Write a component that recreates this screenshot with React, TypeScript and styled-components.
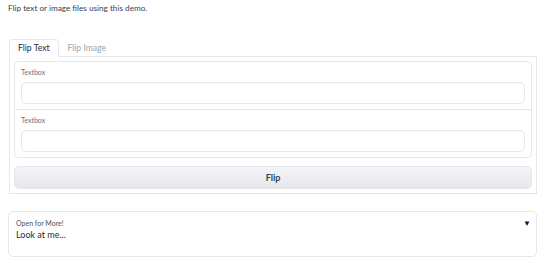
import * as React from "react";
import styled, { createGlobalStyle } from "styled-components";

const GlobalStyle = createGlobalStyle`
  html, body {
    margin: 0;
    padding: 0;
    background: #ffffff;
  }
  body {
    font-family: "Lato", "Noto Sans", sans-serif;
    color: #1f2937;
  }
`;

const Page = styled.div`
  width: 529px;
  padding: 0 8px;
  display: flex;
  flex-direction: column;
`;

const Description = styled.p`
  margin: 0;
  padding-top: 3px;
  height: 36px;
  font-size: 8.2px;
  line-height: 11px;
  color: #374151;
`;

const TabBar = styled.div`
  display: flex;
  margin-left: 1px;
  border-bottom: 1px solid #e5e7eb;
  height: 17px;
`;

const Tab = styled.button<{ $active?: boolean }>`
  all: unset;
  box-sizing: border-box;
  height: 18px;
  padding: 0 8px;
  margin-bottom: -1px;
  font-family: inherit;
  font-size: 8.6px;
  line-height: 17px;
  color: ${p => (p.$active ? "#1f2937" : "#9ca3af")};
  background: ${p => (p.$active ? "#ffffff" : "transparent")};
  border: 1px solid ${p => (p.$active ? "#e5e7eb" : "transparent")};
  border-bottom-color: ${p => (p.$active ? "#ffffff" : "transparent")};
  border-radius: 4px 4px 0 0;
`;

const TabPanel = styled.div`
  margin-left: 1px;
  border: 1px solid #e5e7eb;
  border-top: none;
  padding: 4px 4px 4px;
  display: flex;
  flex-direction: column;
  gap: 8px;
`;

const Form = styled.div`
  border: 1px solid #e5e7eb;
  border-radius: 4px;
  display: flex;
  flex-direction: column;
`;

const Field = styled.label<{ $divided?: boolean }>`
  display: flex;
  flex-direction: column;
  padding: 5px 6px 5px;
  border-top: ${p => (p.$divided ? "1px solid #e5e7eb" : "none")};
`;

const Label = styled.span`
  font-size: 7px;
  line-height: 10px;
  color: #6b7280;
  margin-bottom: 5px;
`;

const Input = styled.textarea`
  box-sizing: border-box;
  height: 22px;
  width: 100%;
  resize: none;
  border: 1px solid #e5e7eb;
  border-radius: 5px;
  background: #ffffff;
  box-shadow: inset 0 1px 1px rgba(0, 0, 0, 0.02);
  outline: none;
  font-family: inherit;
`;

const Button = styled.button`
  height: 23px;
  border: 1px solid #e5e7eb;
  border-radius: 5px;
  background: linear-gradient(to bottom, #f3f4f6, #e5e7eb);
  font-family: inherit;
  font-weight: 700;
  font-size: 9px;
  color: #374151;
`;

const Accordion = styled.div`
  margin-top: 17px;
  box-sizing: border-box;
  height: 46px;
  border: 1px solid #e5e7eb;
  border-radius: 5px;
  padding: 6px 5px 5px 7px;
  display: flex;
  flex-direction: column;
`;

const AccordionHead = styled.div`
  display: flex;
  justify-content: space-between;
  align-items: center;
  font-size: 7px;
  line-height: 10px;
  color: #4b5563;
`;

const Arrow = styled.span`
  font-size: 8px;
  color: #111827;
`;

const AccordionBody = styled.div`
  font-size: 9px;
  line-height: 14px;
  color: #1f2937;
`;

export default function App() {
  return (
    <>
      <GlobalStyle />
      <Page>
        <Description>Flip text or image files using this demo.</Description>
        <TabBar>
          <Tab $active>Flip Text</Tab>
          <Tab>Flip Image</Tab>
        </TabBar>
        <TabPanel>
          <Form>
            <Field>
              <Label>Textbox</Label>
              <Input />
            </Field>
            <Field $divided>
              <Label>Textbox</Label>
              <Input />
            </Field>
          </Form>
          <Button>Flip</Button>
        </TabPanel>
        <Accordion>
          <AccordionHead>
            <span>Open for More!</span>
            <Arrow>▼</Arrow>
          </AccordionHead>
          <AccordionBody>Look at me...</AccordionBody>
        </Accordion>
      </Page>
    </>
  );
}
